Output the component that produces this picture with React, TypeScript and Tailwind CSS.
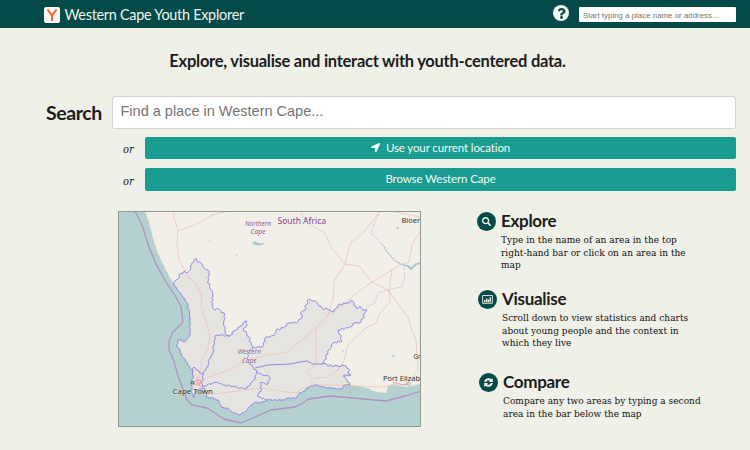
import type { ReactNode } from "react";
import { FaLocationArrow, FaSearch, FaQuestion } from "react-icons/fa";

type Point = [number, number];

const parse = (s: string): Point[] =>
  s.split(" ").map((p) => p.split(",").map(Number) as Point);

// Breaks long segments into short zigzags, the way surveyed borders look.
const OFFSETS = [0.7, -0.9, 0.3, 1, -0.6, -0.2, 0.9, -1];
function rough(s: string, amount = 1): string {
  const points = parse(s);
  const out: Point[] = [points[0]];
  let n = 0;
  for (let i = 1; i < points.length; i++) {
    const [ax, ay] = points[i - 1];
    const [bx, by] = points[i];
    const length = Math.hypot(bx - ax, by - ay);
    const parts = Math.max(1, Math.round(length / 2));
    for (let k = 1; k < parts; k++) {
      const o = OFFSETS[n++ % OFFSETS.length] * amount;
      out.push([
        ax + ((bx - ax) * k) / parts - ((by - ay) / length) * o,
        ay + ((by - ay) * k) / parts + ((bx - ax) / length) * o,
      ]);
    }
    out.push([bx, by]);
  }
  return out.map(([x, y]) => `${x.toFixed(1)} ${y.toFixed(1)}`).join("L");
}

const WEST_COAST =
  "145,211 149,222 151.7,233 155,245 160,258 167,272 174,285";
const CAPE_COAST =
  "174,285 181,294 187,303 189,310 190,320 190,335 187,339 184,342 181,340 178,340 177,347 180,350 181.5,356 185,359 188,365 192,370 193,378 191,382 192,388 191.7,393 194,398 195,392 199,389 204,388 207,393 206,397 213,398 218,400 221,407 227,408 232,412 240,415 247,410 251,405 256,402 260,403 267,400 283,400 288,398 297,398 299,393 305,391 307,388 315,385 328,388 342,389 344,385 350,385";
const EAST_COAST =
  "350,385 358,386 368,388 373,391 378,392 386,393 388,386 393,384 401,386 408,387 415,385 421,384";
const INLAND =
  "350,385 347,380 343,376 351,375 348,372 349,369 346,366 334,366 323,364 326,357 329,350 333,343 342,341 338,330 348,328 355,323 361,322 364,316 366,309 363,310 361,307 356,308 353,301 347,303 338,305 334,312 330,310 322,308 318,304 314,301 309,299 306,305 305,310 301,312 302,317 298,322 289,323 283,328 276,330 274,336 266,337 262,347 256,348 251,345 249,337 243,329 246,327 247,321 243,323 240,327 234,331 229,337 227,335 225,331 224,326 224,320 225,315 219,309 215,310 212,306 213,296 211,290 208,281 209,276 208,270 204,268 202,264 198,262 197,259 194,260 192,263 191,268 187,273 183,272 179,275 178,279 175,281 174,285";

const CAPE = rough(CAPE_COAST, 0.5);
const BORDER = rough(INLAND);
const LAND = `M${rough(WEST_COAST, 0.2)}L${CAPE}L${rough(EAST_COAST, 0.3)}L421 211Z`;
const PROVINCE = `M${CAPE}L${BORDER}Z`;

const DISTRICTS = [
  "229,336 216,335 214,342 213,354 209,359 208,367 204,371 203,375 194,367 192,372",
  "203,375 202,387 210,384 218,382 223,385 230,386 236,387 245,389 249,386 252,382 255,378 257,372 253,367 250,364 247,358 249,352 253,347",
  "257,372 262,375 267,375 270,378 268,384 264,383 260,383 262,390 259,392 258,397 267,400",
];
const SOUTH_BORDER = "M255 368L268 365L290 364L300 362L307 361L313 364L323 364";

const ROADS = [
  "M174 211L174 219L178 229L177 242L179 260L185 271L190 279L196 284L202 297L201 306L206 321L210 335L208 349L202 359L200 375L197 382",
  "M178 231L195 225L212 215L228 211",
  "M197 383L214 375L232 369L244 361L263 356L287 352L316 328L331 312L344 304L353 296L372 282L400 265L409 262L412 245L420 232",
  "M302 211L302 216L310 225L324 232L332 248L345 264L359 266L372 282L388 290L399 305L408 317L412 331L416 341L418 370L407 384",
  "M380 211L364 232L351 242L345 264L334 281L333 299L328 315",
  "M316 328L316 365L307 371L313 384",
  "M201 390L214 394L245 390L262 388L279 391L296 393L303 388L313 385L343 385L360 386L379 387L407 384",
  "M392 269L389 290L390 301L379 315L376 323L366 328L348 345L344 361L338 370L328 377L312 379",
  "M392 211L420 217",
];

function MapView() {
  return (
    <svg
      viewBox="118 211 303 216"
      className="block h-[216px] w-[303px]"
      fill="none"
      role="img"
      aria-label="Western Cape map"
    >
      <path fill="#b5d0d0" d="M118 211h303v216H118z" />
      <path fill="#f2efe9" d={LAND} />
      <path fill="#e5e4e1" d={PROVINCE} />
      <g stroke="#f2c6ba" strokeWidth=".9" strokeLinejoin="round">
        {ROADS.map((d) => (
          <path key={d} d={d} />
        ))}
      </g>
      <path
        stroke="#ad91c0"
        strokeWidth="1.3"
        strokeLinejoin="round"
        d="M135 211L142 225L149 247L156 264L166 282L176 297L181 307L183 322L173 332L169 341L169 350L174 361L178 376L184 392L187 400L192 405L207 408L224 419L241 423L253 418L271 410L295 407L301 404L309 399L330 396L386 401L405 396L421 391"
      />
      <path stroke="#bdaccb" strokeWidth=".7" d="M350 385V396" />
      <path
        stroke="#d8b9da"
        strokeWidth=".9"
        strokeDasharray="2.5 1"
        d="M380 211L375 222L371 233L383 245L393 260L404 266L405 278L401 287L388 290L378 293L375 303L366 307"
      />
      <path stroke="#a3bfc8" strokeWidth="1.1" strokeDasharray="2 1.5" d="M382 244L388 253L396 261L404 265" />
      <path stroke="#9fc5ca" strokeWidth="1.8" d="M404 265L408 266L411 269L416 264L421 263" />
      <path fill="#a6cccd" d="M252 243l3-2 3 2 7 .4-6 2-5-.4zM235 254l3 1-1 1zM396 227l3 0-1 3zM391 354l4 2-1 2zM342 350l3 1-2 1zM209 240l1 0 0 3z" />
      <g stroke="#827ae3" strokeWidth=".85" strokeLinejoin="round">
        <path d={PROVINCE} />
        {DISTRICTS.map((d) => (
          <path key={d} d={`M${rough(d, 0.8)}`} />
        ))}
        <path d={SOUTH_BORDER} />
      </g>
      <path stroke="#ef9b9b" strokeWidth=".8" d="M194 381l7-1-2 6M197 376v8l5-1M194 384l7 2" />
      <path stroke="#e99a9a" strokeWidth=".9" d="M393 383l5 0 4 2 5-1" />
      <path stroke="#555" strokeWidth=".7" fill="#aaa" d="M191.500 381.500h2.500v2.500h-2.500z" />
      <circle cx="408.500" cy="384" r="1.700" stroke="#888" strokeWidth=".7" fill="#eee" />
      <g
        stroke="#f2efe9"
        strokeWidth="1.200"
        strokeOpacity=".6"
        paintOrder="stroke"
        className="font-['Noto_Sans',sans-serif]"
      >
        <g fill="#8f6096" fontStyle="italic" fontSize="6.700">
          <text x="245" y="225.700" textLength="26" lengthAdjust="spacingAndGlyphs">Northern</text>
          <text x="250.500" y="234" textLength="15" lengthAdjust="spacingAndGlyphs">Cape</text>
          <text x="237.500" y="354.300" textLength="23.500" lengthAdjust="spacingAndGlyphs">Western</text>
          <text x="242" y="362.700" textLength="14.500" lengthAdjust="spacingAndGlyphs">Cape</text>
        </g>
        <text x="277.500" y="224" fill="#84458a" fontSize="8" textLength="48.500" lengthAdjust="spacingAndGlyphs">South Africa</text>
        <g fill="#303030" fontSize="7.900">
          <text x="401.500" y="223" textLength="18.500" lengthAdjust="spacingAndGlyphs">Bloer</text>
          <text x="172.500" y="393.600" textLength="40.500" lengthAdjust="spacingAndGlyphs">Cape Town</text>
          <text x="383" y="381" textLength="37" lengthAdjust="spacingAndGlyphs">Port Elizab</text>
          <text x="413.500" y="358.600" fontSize="6.800" textLength="7" lengthAdjust="spacingAndGlyphs">Gr</text>
        </g>
      </g>
    </svg>
  );
}

function ChartIcon() {
  return (
    <svg viewBox="0 0 12 10" className="h-[9px] w-[11px]" fill="none" stroke="currentColor">
      <path d="M.6 .6h10.800v8.600H.6z" />
      <path strokeWidth="1.500" d="M3 8V5.500M5 8V4M7 8V5M9 8V2.500" />
    </svg>
  );
}

function RefreshIcon() {
  return (
    <svg viewBox="0 0 512 512" className="size-[11px]" fill="currentColor">
      <path d="M56 235C68 125 152 54 256 54c55 0 105 20 142 55l58-54v182H274l57-57c-21-18-47-28-75-28-52 0-91 31-106 83zM456 277c-12 110-96 181-200 181-55 0-105-20-142-55l-58 54V275h182l-57 57c21 18 47 28 75 28 52 0 91-31 106-83z" />
    </svg>
  );
}

type FeatureProps = {
  icon: ReactNode;
  title: string;
  lines: string[];
  className: string;
};

function Feature({ icon, title, lines, className }: FeatureProps) {
  return (
    <section className={`flex gap-[5px] ${className}`}>
      <span className="mt-px flex size-[19px] shrink-0 items-center justify-center rounded-full bg-[#044a49] text-[#f5f6ee]">
        {icon}
      </span>
      <div>
        <h2 className="text-[17px] leading-5 font-bold tracking-[-0.300px] whitespace-nowrap">{title}</h2>
        <p className="mt-[3px] font-['DejaVu_Serif_Condensed','DejaVu_Serif',serif] text-[10px] leading-[12.700px] font-normal tracking-[0.030px] text-[#111111] [font-stretch:condensed]">
          {lines.map((line) => (
            <span key={line} className="block whitespace-nowrap">
              {line}
            </span>
          ))}
        </p>
      </div>
    </section>
  );
}

function Or() {
  return (
    <span className="w-[22px] pt-1 font-['DejaVu_Serif_Condensed','DejaVu_Serif',serif] text-[11px] leading-4 italic [font-stretch:condensed]">
      or
    </span>
  );
}

export default function App() {
  return (
    <div className="h-[450px] w-[750px] overflow-hidden bg-[#eff0e8] font-['Lato',sans-serif] text-[#1c1c1c]">
      <header className="flex h-7 items-center bg-[#044a49] pr-[14px] pl-11">
        <span className="mt-[2px] flex size-4 items-center justify-center rounded-[2px] bg-[#fbf8f3]">
          <svg viewBox="0 0 16 16" className="size-4" fill="none" stroke="#e9683c" strokeWidth="2">
            <path d="M3.500 2.500L8 8.500L12.500 2.500M8 8v6" />
          </svg>
        </span>
        <h1 className="mt-px ml-[4.500px] text-[14.400px] leading-5 tracking-[-0.260px] whitespace-nowrap text-[#f0f4ee]">
          Western Cape Youth Explorer
        </h1>
        <span className="mt-[-2px] mr-[10px] ml-auto flex size-4 items-center justify-center rounded-full bg-[#f8faf4] text-[#044a49]">
          <FaQuestion className="size-[11px]" />
        </span>
        <input
          className="h-[15px] w-[157px] rounded-[1px] bg-white px-1 pt-[2px] font-['Liberation_Sans',sans-serif] text-[7.900px] placeholder:text-[#757575]"
          placeholder="Start typing a place name or address..."
        />
      </header>

      <p className="mt-[22px] pr-[15px] text-center text-[16.500px] leading-[22px] font-bold tracking-[-0.260px]">
        Explore, visualise and interact with youth-centered data.
      </p>

      <div className="mt-6 flex h-[33px] items-center pr-[14px] pl-[46px]">
        <h2 className="w-[66px] text-[19.500px] leading-none font-bold tracking-[-0.400px]">Search</h2>
        <input
          className="h-[33px] min-w-0 flex-1 rounded-[3px] border border-[#d2d6d0] bg-white px-[7.500px] pb-[3px] font-['Liberation_Sans',sans-serif] text-[14.500px] placeholder:text-[#757575]"
          placeholder="Find a place in Western Cape..."
        />
      </div>

      <div className="mt-2 flex h-[22px] items-center pr-[14px] pl-[123px]">
        <Or />
        <button className="flex h-[22px] flex-1 items-center justify-center gap-[6px] rounded-[2px] bg-[#1b9c93] pb-px text-[11.500px] tracking-[-0.120px] text-[#f4faf5]">
          <FaLocationArrow className="size-[9px]" />
          Use your current location
        </button>
      </div>
      <div className="mt-[9px] flex h-[23px] items-center pr-[14px] pl-[123px]">
        <Or />
        <button className="h-[23px] flex-1 rounded-[2px] bg-[#1b9c93] pb-px text-[11.500px] tracking-[-0.120px] text-[#f4faf5]">
          Browse Western Cape
        </button>
      </div>

      <main className="flex items-start pt-5 pl-[118px]">
        <div className="relative h-[216px] w-[303px] shrink-0 overflow-hidden after:pointer-events-none after:absolute after:inset-0 after:border after:border-[#929995]">
          <MapView />
        </div>
        <div className="ml-[56px]">
          <Feature
            className="h-[78px]"
            icon={<FaSearch className="size-[9px]" />}
            title="Explore"
            lines={[
              "Type in the name of an area in the top",
              "right-hand bar or click on an area in the",
              "map",
            ]}
          />
          <Feature
            className="ml-px h-[83px]"
            icon={<ChartIcon />}
            title="Visualise"
            lines={[
              "Scroll down to view statistics and charts",
              "about young people and the context in",
              "which they live",
            ]}
          />
          <Feature
            className="ml-[2px]"
            icon={<RefreshIcon />}
            title="Compare"
            lines={[
              "Compare any two areas by typing a second",
              "area in the bar below the map",
            ]}
          />
        </div>
      </main>
    </div>
  );
}
